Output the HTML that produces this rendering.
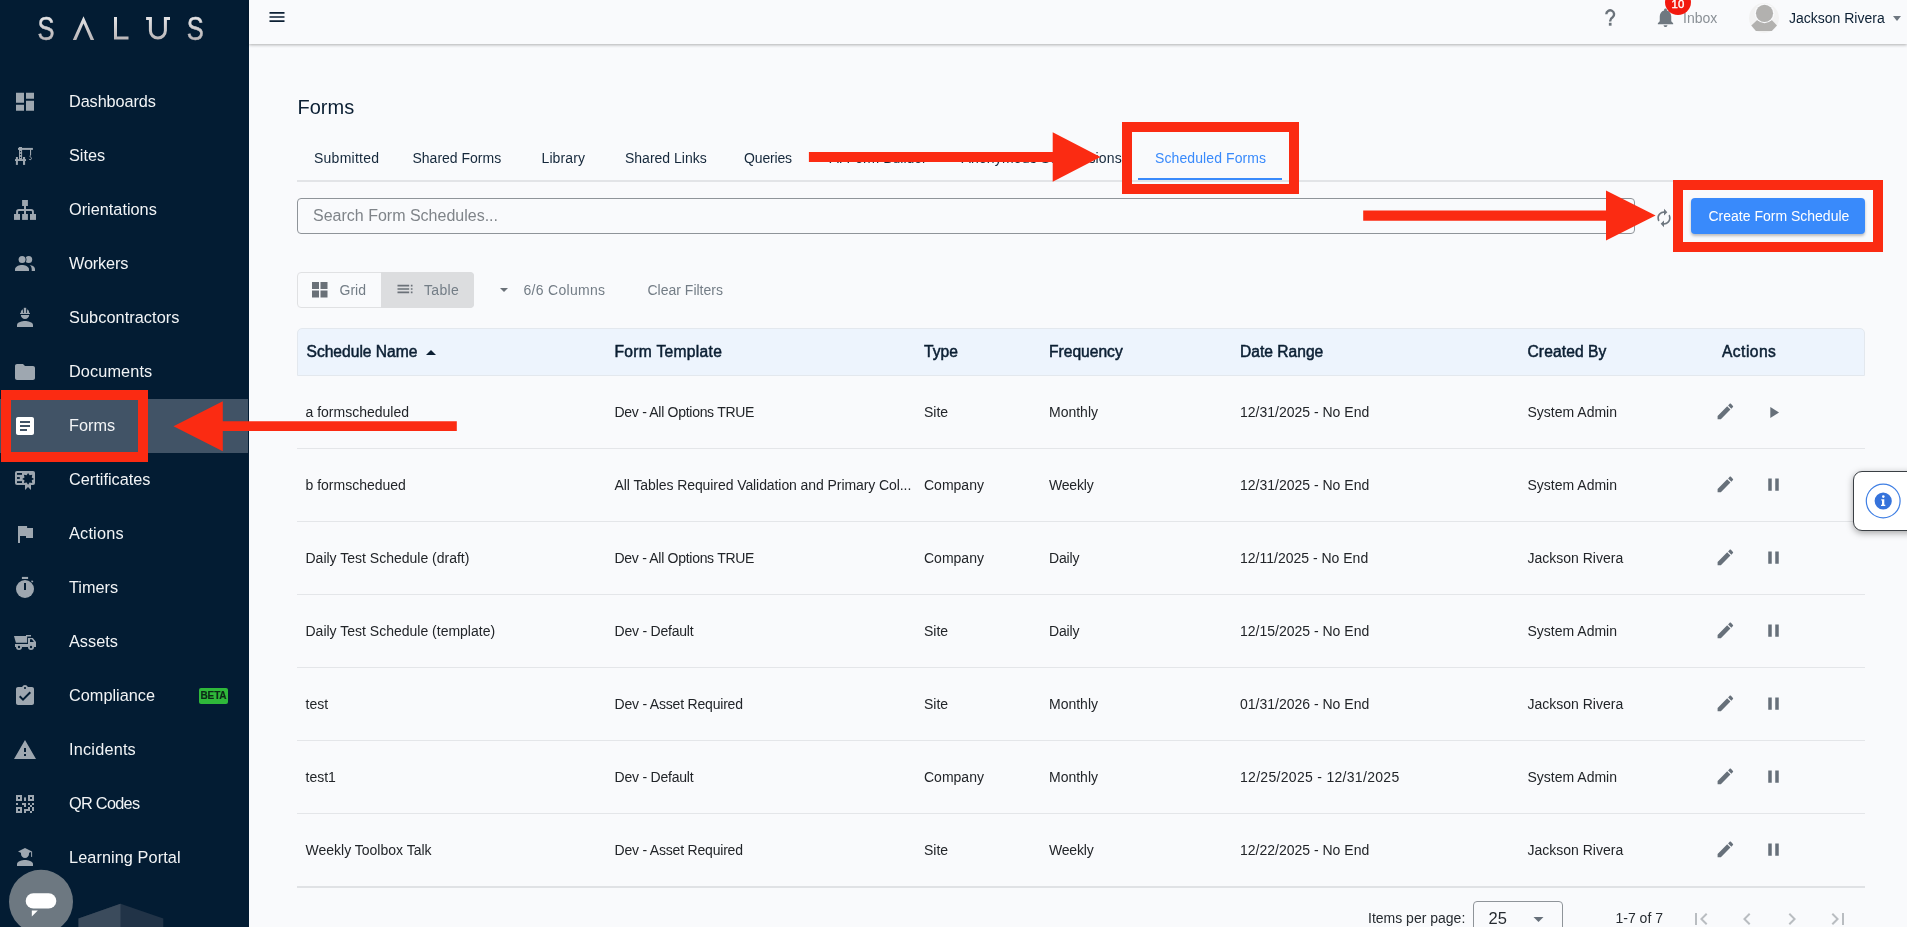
<!DOCTYPE html>
<html><head><meta charset="utf-8">
<style>
*{margin:0;padding:0;box-sizing:border-box}
html,body{width:1907px;height:927px;overflow:hidden;background:#f9fafc;font-family:"Liberation Sans",sans-serif;color:#1b2836;position:relative}
.a{position:absolute;white-space:nowrap}
#side{position:absolute;left:0;top:0;width:249px;height:927px;background:#031c33}
.nav{position:absolute;left:0;width:249px;height:54px}
.nav .t{position:absolute;left:69px;top:0;line-height:54px;font-size:16.3px;color:#f2f4f6}
.nav svg{position:absolute;left:13px;top:15px;width:24px;height:24px;fill:#9ea7b0}
.act{background:transparent}
</style></head><body>
<div style="position:absolute;left:0;top:0;width:1907px;height:927px;will-change:transform">
<div id="side">
<div class="a" style="left:0;top:399px;width:248px;height:54px;background:#415366"></div>
<svg class="a" style="left:30px;top:10px" width="185" height="36" viewBox="0 0 185 36">
<defs><linearGradient id="lg" x1="0" y1="0" x2="0" y2="1"><stop offset="0" stop-color="#e6e6e8"/><stop offset="1" stop-color="#b9b5b7"/></linearGradient>
<linearGradient id="lg2" gradientUnits="userSpaceOnUse" x1="0" y1="6" x2="0" y2="30"><stop offset="0" stop-color="#e6e6e8"/><stop offset="1" stop-color="#b9b5b7"/></linearGradient></defs>
<g fill="url(#lg2)" stroke="url(#lg2)" stroke-width="0.5">
<text x="7.6" y="29.6" font-family="Liberation Sans" font-size="34" textLength="17" lengthAdjust="spacingAndGlyphs">S</text>
<text x="156.8" y="29.6" font-family="Liberation Sans" font-size="34" textLength="17" lengthAdjust="spacingAndGlyphs">S</text>
</g>
<path d="M53.5 6.3L42.8 30H46.3L53.5 13.6L60.6 30H64.2z" fill="url(#lg2)"/>
<g fill="none" stroke="url(#lg2)" stroke-width="3">
<polyline points="85.5,7 85.5,28 98.5,28"/>
<path d="M120.4,7 V20.6 A7.5,7.5 0 0 0 135.4,20.6 V7 M116.1,8.45 H121.9 M133.9,8.45 H140"/>
</g>
</svg>
<div class="nav" style="top:74px"><svg viewBox="0 0 24 24"><g transform="translate(0,.8)"><path d="M3 13h8V3H3v10zm0 8h8v-6H3v6zm10 0h8V11h-8v10zm0-18v6h8V3h-8z"/></g></svg><div class="t" style="letter-spacing:-0.1px">Dashboards</div></div>
<div class="nav" style="top:128px"><svg viewBox="0 0 24 24"><rect x="5" y="4.9" width="14.9" height="2"/><rect x="5.9" y="4" width="3.1" height="1.5"/><rect x="6" y="5" width="3.1" height="11.4"/><circle cx="7.55" cy="8.6" r=".65" fill="#031c33"/><circle cx="7.55" cy="11.5" r=".65" fill="#031c33"/><circle cx="7.55" cy="14.4" r=".65" fill="#031c33"/><rect x="2" y="16.1" width="11" height="1.9"/><rect x="2.9" y="14" width="2" height="7.9"/><rect x="10" y="14" width="2.1" height="7.9"/><rect x="17" y="6.5" width="1.1" height="5.7"/><path d="M17.6 12.3c-1 .2-1.1 1.4-.1 1.7 1.3.4 1.3 2.6-.3 2.7-.6 0-1-.3-1.2-.8" fill="none" stroke="#9ea7b0" stroke-width="1"/></svg><div class="t">Sites</div></div>
<div class="nav" style="top:182px"><svg viewBox="0 0 24 24"><rect x="9.1" y="3" width="5.8" height="6"/><rect x="11" y="9" width="2" height="8"/><path d="M3.1 17v-2.2a2.8 2.8 0 0 1 2.8-2.8h12.2a2.8 2.8 0 0 1 2.8 2.8V17h-1.9v-2.2a.8.8 0 0 0-.8-.8H5.9a.8.8 0 0 0-.8.8V17z"/><rect x="1" y="17" width="6" height="5.9"/><rect x="9.1" y="17" width="5.8" height="5.9"/><rect x="17" y="17" width="6" height="5.9"/></svg><div class="t">Orientations</div></div>
<div class="nav" style="top:236px"><svg viewBox="0 0 24 24"><circle cx="15.7" cy="8.5" r="3.5"/><circle cx="9.1" cy="8.5" r="4.4" fill="#031c33"/><circle cx="9.1" cy="8.5" r="3.5"/><path d="M2 20v-1.6c0-3 4.4-4.4 7-4.4s7 1.4 7 4.4V20z"/><path d="M16.7 14.1c2.5.3 5.3 1.6 5.3 4.1V20h-3.3v-1.8c0-1.7-.8-3-2-4.1z"/></svg><div class="t" style="letter-spacing:-0.15px">Workers</div></div>
<div class="nav" style="top:290px"><svg viewBox="0 0 24 24"><path d="M4 22v-2.2c0-2.6 5.3-3.8 8-3.8s8 1.2 8 3.8V22z"/><path d="M7.8 10h8.4c0 2.3-1.9 4-4.2 4s-4.2-1.7-4.2-4z"/><rect x="7" y="7.9" width="10" height="1.2" rx=".4"/><rect x="10.8" y="2.8" width="2.4" height="5.5"/><path d="M7.7 8.2c0-1.7.7-3.1 2.1-3.9l.3 3.9zM16.3 8.2c0-1.7-.7-3.1-2.1-3.9l-.3 3.9z"/></svg><div class="t" style="letter-spacing:0.07px">Subcontractors</div></div>
<div class="nav" style="top:344px"><svg viewBox="0 0 24 24"><g transform="translate(0,1)"><path d="M10 4H4c-1.1 0-1.99.9-1.99 2L2 18c0 1.1.9 2 2 2h16c1.1 0 2-.9 2-2V8c0-1.1-.9-2-2-2h-8l-2-2z"/></g></svg><div class="t" style="letter-spacing:0.1px">Documents</div></div>
<div class="nav act" style="top:398px"><svg viewBox="0 0 24 24"><g transform="translate(0,1)"><path fill="#fff" d="M19 3H5c-1.1 0-2 .9-2 2v14c0 1.1.9 2 2 2h14c1.1 0 2-.9 2-2V5c0-1.1-.9-2-2-2zm-5 14H7v-2h7v2zm3-4H7v-2h10v2zm0-4H7V7h10v2z"/></g></svg><div class="t">Forms</div></div>
<div class="nav" style="top:452px"><svg viewBox="0 0 24 24"><rect x="2" y="4" width="20" height="14" rx="2"/><rect x="4" y="6" width="5" height="1.8" fill="#031c33"/><rect x="4" y="10.1" width="2.8" height="1.8" fill="#031c33"/><rect x="4" y="14.2" width="5" height="1.8" fill="#031c33"/><path d="M12 17h6v6l-3-3-3 3z"/><path fill="#031c33" d="M15.1 6l1.5 2.3 2.7-.5-.6 2.7 2.4 1.4-2.4 1.4.6 2.7-2.7-.5-1.5 2.3-1.5-2.3-2.7.5.6-2.7-2.4-1.4 2.4-1.4-.6-2.7 2.7.5z"/></svg><div class="t">Certificates</div></div>
<div class="nav" style="top:506px"><svg viewBox="0 0 24 24"><path d="M5 5h9.1v2H20v10h-7v-2H7v7H5z"/></svg><div class="t" style="letter-spacing:0.2px">Actions</div></div>
<div class="nav" style="top:560px"><svg viewBox="0 0 24 24"><rect x="8.9" y="1.9" width="6.2" height="2.1"/><circle cx="12" cy="14" r="9"/><rect x="11" y="8" width="2" height="7" fill="#031c33"/><path d="M18 6.2l1-1 1.4 1.4-1 1z"/></svg><div class="t">Timers</div></div>
<div class="nav" style="top:614px"><svg viewBox="0 0 24 24"><path d="M1 7h13.1v6.8H2.9z"/><rect x="13" y="6" width="5" height="1.5"/><path d="M15 9h4.8l3.2 4v5h-2.1a3 3 0 0 0-5.8 0H9a3 3 0 0 0-5.8 0H2v-3h13z"/><path d="M17 10.3v2.6h3.9l-2-2.6z" fill="#031c33"/><circle cx="6" cy="18" r="3"/><circle cx="18" cy="18" r="3"/><circle cx="6" cy="18" r="1.2" fill="#031c33"/><circle cx="18" cy="18" r="1.2" fill="#031c33"/></svg><div class="t">Assets</div></div>
<div class="nav" style="top:668px"><svg viewBox="0 0 24 24"><g transform="translate(0,1)"><path d="M19 3h-4.18C14.4 1.84 13.3 1 12 1c-1.3 0-2.4.84-2.82 2H5c-1.1 0-2 .9-2 2v14c0 1.1.9 2 2 2h14c1.1 0 2-.9 2-2V5c0-1.1-.9-2-2-2zm-7 0c.55 0 1 .45 1 1s-.45 1-1 1-1-.45-1-1 .45-1 1-1zm-2 14l-4-4 1.41-1.41L10 14.17l6.59-6.59L18 9l-8 8z"/></g></svg><div class="t">Compliance</div></div>
<div class="nav" style="top:722px"><svg viewBox="0 0 24 24"><g transform="translate(0,1)"><path d="M1 21h22L12 2 1 21zm12-3h-2v-2h2v2zm0-4h-2v-4h2v4z"/></g></svg><div class="t" style="letter-spacing:0.2px">Incidents</div></div>
<div class="nav" style="top:776px"><svg viewBox="0 0 24 24"><path d="M3 4h6v6H3zm2 2v2h2V6zM15 4h6v6h-6zm2 2v2h2V6zM3 16h6v6H3zm2 2v2h2v-2z" fill-rule="evenodd"/><rect x="11" y="6.4" width="2" height="3.6"/><rect x="3" y="12" width="2" height="2"/><rect x="9" y="12" width="4" height="2"/><rect x="11" y="14" width="2" height="2"/><rect x="15" y="12" width="2" height="2"/><rect x="19" y="12" width="2" height="2"/><rect x="17" y="14" width="2" height="2"/><rect x="15" y="16" width="2" height="2"/><rect x="19" y="16" width="2" height="4"/><rect x="11" y="18" width="6" height="2"/><rect x="11" y="20" width="2" height="2"/><rect x="17" y="20" width="2" height="2"/></svg><div class="t" style="letter-spacing:-0.7px">QR Codes</div></div>
<div class="nav" style="top:830px"><svg viewBox="0 0 24 24"><path d="M4 21v-2c0-2.7 5.3-4 8-4s8 1.3 8 4v2z"/><path d="M8 7.3h8v1.6c0 2.2-1.8 4-4 4s-4-1.8-4-4z"/><path d="M12 3l-7 3.5 7 3.3 7-3.3z"/><rect x="18.1" y="6.5" width="1" height="5.4"/></svg><div class="t" style="letter-spacing:0.08px">Learning Portal</div></div>
<div class="a" style="left:199px;top:688px;width:29px;height:16px;background:#2fb83a;border-radius:2px;font-size:10px;font-weight:bold;color:#0c2a17;line-height:16px;text-align:center;letter-spacing:-.15px;-webkit-text-stroke:.2px #0c2a17">BETA</div>
</div>

<div class="a" style="left:249px;top:0px;width:1658px;height:44px;background:#f9fafc;box-shadow:0 1px 3px rgba(0,0,0,.3)"></div>
<svg class="a" style="left:266.8px;top:7.3px;" width="20" height="20" viewBox="0 0 24 24" fill="#0b1f33"><path d="M3 18h18v-2H3v2zm0-5h18v-2H3v2zm0-7v2h18V6H3z"/></svg>
<svg class="a" style="left:1600px;top:5px;" width="20" height="25" viewBox="0 0 20 25" fill="#6e7780"><path d="M6.3 9.2A3.9 3.9 0 1 1 12.6 12.3C11.1 13.3 10.2 14.1 10.2 15.9V16.4" fill="none" stroke="#6b737b" stroke-width="2.4"/><rect x="8.85" y="17.8" width="2.7" height="2.9" fill="#6b737b"/></svg>
<svg class="a" style="left:1654px;top:6.3px;" width="23" height="23" viewBox="0 0 24 24" fill="#6f7880"><path d="M12 22c1.1 0 2-.9 2-2h-4c0 1.1.89 2 2 2zm6-6v-5c0-3.07-1.64-5.64-4.5-6.32V4c0-.83-.67-1.5-1.5-1.5s-1.5.67-1.5 1.5v.68C7.63 5.36 6 7.92 6 11v5l-2 2v1h16v-1l-2-2z"/></svg>
<div class="a" style="left:1683px;top:10.40px;font-size:14px;line-height:17.5px;color:#8a9096">Inbox</div>
<div class="a" style="left:1665px;top:-11px;width:26px;height:26px;background:#f2180e;border-radius:13px"></div>
<div class="a" style="left:1671.6px;top:-2.78px;font-size:11.4px;line-height:14.25px;color:#fff;-webkit-text-stroke:0.35px #fff">10</div>
<svg class="a" style="left:1749px;top:3px;" width="30" height="30" viewBox="0 0 30 30" fill="#6e7780"><circle cx="15" cy="15" r="15" fill="#f2f2f2"/><path d="M8.5 16.8H22.5L28 22.6L22.8 28H6.9L2.3 22.6z" fill="#b2b1af"/><circle cx="15.5" cy="10.3" r="9.9" fill="#f9fafc"/><circle cx="15.5" cy="10.3" r="8.6" fill="#b2b1af"/></svg>
<div class="a" style="left:1789px;top:9.90px;font-size:14px;line-height:17.5px;color:#0b1f33">Jackson Rivera</div>
<svg class="a" style="left:1893px;top:15.5px;" width="8" height="5" viewBox="0 0 8 5" fill="#6e7780"><path d="M0 0h8L4 5z"/></svg>
<div class="a" style="left:297.5px;top:94.57px;font-size:20px;line-height:25.0px;color:#0b1f33">Forms</div>
<div class="a" style="left:314px;top:150.20px;font-size:14px;line-height:17.5px;color:#15283b;letter-spacing:0.25px">Submitted</div>
<div class="a" style="left:412.5px;top:150.20px;font-size:14px;line-height:17.5px;color:#15283b">Shared Forms</div>
<div class="a" style="left:541.5px;top:150.20px;font-size:14px;line-height:17.5px;color:#15283b;letter-spacing:0.1px">Library</div>
<div class="a" style="left:625px;top:150.20px;font-size:14px;line-height:17.5px;color:#15283b">Shared Links</div>
<div class="a" style="left:744px;top:150.20px;font-size:14px;line-height:17.5px;color:#15283b;letter-spacing:-0.15px">Queries</div>
<div class="a" style="left:829.5px;top:150.20px;font-size:14px;line-height:17.5px;color:#15283b">AI Form Builder</div>
<div class="a" style="left:961.5px;top:150.20px;font-size:14px;line-height:17.5px;color:#15283b;letter-spacing:0.15px">Anonymous Submissions</div>
<div class="a" style="left:297px;top:180px;width:1568px;height:2px;background:#e2e4e7;"></div>
<div class="a" style="left:1155px;top:150.20px;font-size:14px;line-height:17.5px;color:#398afb;letter-spacing:0.1px">Scheduled Forms</div>
<div class="a" style="left:1138px;top:177.5px;width:144px;height:2px;background:#398afb;"></div>
<div class="a" style="left:297px;top:198px;width:1338px;height:36px;background:transparent;border:1px solid #8f9499;border-radius:4px"></div>
<div class="a" style="left:313px;top:205.96px;font-size:16px;line-height:20.0px;color:#7f8489">Search Form Schedules...</div>
<svg class="a" style="left:1653.8px;top:207.5px;" width="20" height="20" viewBox="0 0 24 24" fill="#6e7780"><path d="M12 6v3l4-4-4-4v3c-4.42 0-8 3.58-8 8 0 1.57.46 3.03 1.24 4.26L6.7 14.8c-.45-.83-.7-1.790-.7-2.8 0-3.31 2.69-6 6-6zm6.76 1.74L17.3 9.2c.44.84.7 1.79.7 2.8 0 3.31-2.69 6-6 6v-3l-4 4 4 4v-3c4.42 0 8-3.58 8-8 0-1.570-.46-3.03-1.24-4.26z"/></svg>
<div class="a" style="left:1691px;top:198px;width:174px;height:36px;background:#398afb;border-radius:4px;box-shadow:0 2px 3px rgba(0,0,0,.25)"></div>
<div class="a" style="left:1708.5px;top:208.10px;font-size:14px;line-height:17.5px;color:#fff">Create Form Schedule</div>
<div class="a" style="left:297px;top:272px;width:177px;height:36px;background:#f9fafc;border:1px solid #e0e1e3;border-radius:4px"></div>
<div class="a" style="left:381px;top:272px;width:93px;height:36px;background:#dcdddf;border-radius:0 4px 4px 0"></div>
<svg class="a" style="left:312px;top:282px;" width="16" height="16" viewBox="0 0 16 16" fill="#6a7178"><rect x="0" y="0" width="7" height="7"/><rect x="8.5" y="0" width="7" height="7"/><rect x="0" y="8.5" width="7" height="7"/><rect x="8.5" y="8.5" width="7" height="7"/></svg>
<div class="a" style="left:339.5px;top:281.60px;font-size:14px;line-height:17.5px;color:#737d86">Grid</div>
<svg class="a" style="left:394.6px;top:279.4px;" width="20" height="20" viewBox="0 0 24 24" fill="#6a7178"><path d="M3 9h14V7H3v2zm0 4h14v-2H3v2zm0 4h14v-2H3v2zm16 0h2v-2h-2v2zm0-10v2h2V7h-2zm0 6h2v-2h-2v2z"/></svg>
<div class="a" style="left:424px;top:281.60px;font-size:14px;line-height:17.5px;color:#737d86;letter-spacing:0.3px">Table</div>
<svg class="a" style="left:500px;top:288px;" width="8" height="4" viewBox="0 0 8 4" fill="#6a7178"><path d="M0 0h8L4 4z"/></svg>
<div class="a" style="left:523.5px;top:281.60px;font-size:14px;line-height:17.5px;color:#737d86;letter-spacing:0.3px">6/6 Columns</div>
<div class="a" style="left:647.5px;top:281.60px;font-size:14px;line-height:17.5px;color:#737d86">Clear Filters</div>
<div class="a" style="left:297px;top:328px;width:1568px;height:48px;background:#edf4fd;border:1px solid #e3e8ee;border-radius:5px 5px 0 0"></div>
<div class="a" style="left:306.5px;top:342.34px;font-size:15.6px;line-height:19.5px;color:#0b1f33;-webkit-text-stroke:0.5px #0b1f33">Schedule Name</div>
<div class="a" style="left:614.5px;top:342.34px;font-size:15.6px;line-height:19.5px;color:#0b1f33;letter-spacing:0.3px;-webkit-text-stroke:0.5px #0b1f33">Form Template</div>
<div class="a" style="left:924px;top:342.34px;font-size:15.6px;line-height:19.5px;color:#0b1f33;-webkit-text-stroke:0.5px #0b1f33">Type</div>
<div class="a" style="left:1049px;top:342.34px;font-size:15.6px;line-height:19.5px;color:#0b1f33;-webkit-text-stroke:0.5px #0b1f33">Frequency</div>
<div class="a" style="left:1240px;top:342.34px;font-size:15.6px;line-height:19.5px;color:#0b1f33;-webkit-text-stroke:0.5px #0b1f33">Date Range</div>
<div class="a" style="left:1527.5px;top:342.34px;font-size:15.6px;line-height:19.5px;color:#0b1f33;letter-spacing:0.1px;-webkit-text-stroke:0.5px #0b1f33">Created By</div>
<div class="a" style="left:1722px;top:342.34px;font-size:15.6px;line-height:19.5px;color:#0b1f33;letter-spacing:0.45px;-webkit-text-stroke:0.5px #0b1f33">Actions</div>
<svg class="a" style="left:425.5px;top:350px;" width="10" height="5" viewBox="0 0 10 5" fill="#0b1f33"><path d="M0 5h10L5 0z"/></svg>
<div class="a" style="left:305.5px;top:404.10px;font-size:14px;line-height:17.5px;color:#222529">a formscheduled</div>
<div class="a" style="left:614.5px;top:404.10px;font-size:14px;line-height:17.5px;color:#222529;letter-spacing:-0.29px">Dev - All Options TRUE</div>
<div class="a" style="left:924px;top:404.10px;font-size:14px;line-height:17.5px;color:#222529">Site</div>
<div class="a" style="left:1049px;top:404.10px;font-size:14px;line-height:17.5px;color:#222529">Monthly</div>
<div class="a" style="left:1240px;top:404.10px;font-size:14px;line-height:17.5px;color:#222529">12/31/2025 - No End</div>
<div class="a" style="left:1527.5px;top:404.10px;font-size:14px;line-height:17.5px;color:#222529">System Admin</div>
<svg class="a" style="left:1715px;top:401px;" width="20.8" height="20.8" viewBox="0 0 24 24" fill="#67707a"><path d="M3 17.25V21h3.75L17.81 9.94l-3.75-3.75L3 17.25zM20.71 7.04c.39-.39.39-1.02 0-1.41l-2.34-2.34c-.39-.39-1.02-.39-1.41 0l-1.83 1.83 3.75 3.75 1.83-1.83z"/></svg>
<svg class="a" style="left:1763.7px;top:402.5px;" width="19" height="19" viewBox="0 0 24 24" fill="#67707a"><path d="M8 5v14l11-7z"/></svg>
<div class="a" style="left:297px;top:448px;width:1568px;height:1px;background:#e4e6e9;"></div>
<div class="a" style="left:305.5px;top:477.10px;font-size:14px;line-height:17.5px;color:#222529">b formschedued</div>
<div class="a" style="left:614.5px;top:477.10px;font-size:14px;line-height:17.5px;color:#222529;letter-spacing:-0.08px">All Tables Required Validation and Primary Col...</div>
<div class="a" style="left:924px;top:477.10px;font-size:14px;line-height:17.5px;color:#222529">Company</div>
<div class="a" style="left:1049px;top:477.10px;font-size:14px;line-height:17.5px;color:#222529;letter-spacing:-0.2px">Weekly</div>
<div class="a" style="left:1240px;top:477.10px;font-size:14px;line-height:17.5px;color:#222529">12/31/2025 - No End</div>
<div class="a" style="left:1527.5px;top:477.10px;font-size:14px;line-height:17.5px;color:#222529">System Admin</div>
<svg class="a" style="left:1715px;top:474px;" width="20.8" height="20.8" viewBox="0 0 24 24" fill="#67707a"><path d="M3 17.25V21h3.75L17.81 9.94l-3.75-3.75L3 17.25zM20.71 7.04c.39-.39.39-1.02 0-1.41l-2.34-2.34c-.39-.39-1.02-.39-1.41 0l-1.83 1.83 3.75 3.75 1.83-1.83z"/></svg>
<svg class="a" style="left:1763px;top:473.8px;" width="21" height="21" viewBox="0 0 24 24" fill="#67707a"><path d="M6 19h4V5H6v14zm8-14v14h4V5h-4z"/></svg>
<div class="a" style="left:297px;top:521px;width:1568px;height:1px;background:#e4e6e9;"></div>
<div class="a" style="left:305.5px;top:550.10px;font-size:14px;line-height:17.5px;color:#222529">Daily Test Schedule (draft)</div>
<div class="a" style="left:614.5px;top:550.10px;font-size:14px;line-height:17.5px;color:#222529;letter-spacing:-0.29px">Dev - All Options TRUE</div>
<div class="a" style="left:924px;top:550.10px;font-size:14px;line-height:17.5px;color:#222529">Company</div>
<div class="a" style="left:1049px;top:550.10px;font-size:14px;line-height:17.5px;color:#222529;letter-spacing:-0.15px">Daily</div>
<div class="a" style="left:1240px;top:550.10px;font-size:14px;line-height:17.5px;color:#222529">12/11/2025 - No End</div>
<div class="a" style="left:1527.5px;top:550.10px;font-size:14px;line-height:17.5px;color:#222529">Jackson Rivera</div>
<svg class="a" style="left:1715px;top:547px;" width="20.8" height="20.8" viewBox="0 0 24 24" fill="#67707a"><path d="M3 17.25V21h3.75L17.81 9.94l-3.75-3.75L3 17.25zM20.71 7.04c.39-.39.39-1.02 0-1.41l-2.34-2.34c-.39-.39-1.02-.39-1.41 0l-1.83 1.83 3.75 3.75 1.83-1.83z"/></svg>
<svg class="a" style="left:1763px;top:546.8px;" width="21" height="21" viewBox="0 0 24 24" fill="#67707a"><path d="M6 19h4V5H6v14zm8-14v14h4V5h-4z"/></svg>
<div class="a" style="left:297px;top:594px;width:1568px;height:1px;background:#e4e6e9;"></div>
<div class="a" style="left:305.5px;top:623.10px;font-size:14px;line-height:17.5px;color:#222529">Daily Test Schedule (template)</div>
<div class="a" style="left:614.5px;top:623.10px;font-size:14px;line-height:17.5px;color:#222529;letter-spacing:-0.22px">Dev - Default</div>
<div class="a" style="left:924px;top:623.10px;font-size:14px;line-height:17.5px;color:#222529">Site</div>
<div class="a" style="left:1049px;top:623.10px;font-size:14px;line-height:17.5px;color:#222529;letter-spacing:-0.15px">Daily</div>
<div class="a" style="left:1240px;top:623.10px;font-size:14px;line-height:17.5px;color:#222529">12/15/2025 - No End</div>
<div class="a" style="left:1527.5px;top:623.10px;font-size:14px;line-height:17.5px;color:#222529">System Admin</div>
<svg class="a" style="left:1715px;top:620px;" width="20.8" height="20.8" viewBox="0 0 24 24" fill="#67707a"><path d="M3 17.25V21h3.75L17.81 9.94l-3.75-3.75L3 17.25zM20.71 7.04c.39-.39.39-1.02 0-1.41l-2.34-2.34c-.39-.39-1.02-.39-1.41 0l-1.83 1.83 3.75 3.75 1.83-1.83z"/></svg>
<svg class="a" style="left:1763px;top:619.8px;" width="21" height="21" viewBox="0 0 24 24" fill="#67707a"><path d="M6 19h4V5H6v14zm8-14v14h4V5h-4z"/></svg>
<div class="a" style="left:297px;top:667px;width:1568px;height:1px;background:#e4e6e9;"></div>
<div class="a" style="left:305.5px;top:696.10px;font-size:14px;line-height:17.5px;color:#222529">test</div>
<div class="a" style="left:614.5px;top:696.10px;font-size:14px;line-height:17.5px;color:#222529;letter-spacing:-0.2px">Dev - Asset Required</div>
<div class="a" style="left:924px;top:696.10px;font-size:14px;line-height:17.5px;color:#222529">Site</div>
<div class="a" style="left:1049px;top:696.10px;font-size:14px;line-height:17.5px;color:#222529">Monthly</div>
<div class="a" style="left:1240px;top:696.10px;font-size:14px;line-height:17.5px;color:#222529">01/31/2026 - No End</div>
<div class="a" style="left:1527.5px;top:696.10px;font-size:14px;line-height:17.5px;color:#222529">Jackson Rivera</div>
<svg class="a" style="left:1715px;top:693px;" width="20.8" height="20.8" viewBox="0 0 24 24" fill="#67707a"><path d="M3 17.25V21h3.75L17.81 9.94l-3.75-3.75L3 17.25zM20.71 7.04c.39-.39.39-1.02 0-1.41l-2.34-2.34c-.39-.39-1.02-.39-1.41 0l-1.83 1.83 3.75 3.75 1.83-1.83z"/></svg>
<svg class="a" style="left:1763px;top:692.8px;" width="21" height="21" viewBox="0 0 24 24" fill="#67707a"><path d="M6 19h4V5H6v14zm8-14v14h4V5h-4z"/></svg>
<div class="a" style="left:297px;top:740px;width:1568px;height:1px;background:#e4e6e9;"></div>
<div class="a" style="left:305.5px;top:769.10px;font-size:14px;line-height:17.5px;color:#222529">test1</div>
<div class="a" style="left:614.5px;top:769.10px;font-size:14px;line-height:17.5px;color:#222529;letter-spacing:-0.22px">Dev - Default</div>
<div class="a" style="left:924px;top:769.10px;font-size:14px;line-height:17.5px;color:#222529">Company</div>
<div class="a" style="left:1049px;top:769.10px;font-size:14px;line-height:17.5px;color:#222529">Monthly</div>
<div class="a" style="left:1240px;top:769.10px;font-size:14px;line-height:17.5px;color:#222529;letter-spacing:0.3px">12/25/2025 - 12/31/2025</div>
<div class="a" style="left:1527.5px;top:769.10px;font-size:14px;line-height:17.5px;color:#222529">System Admin</div>
<svg class="a" style="left:1715px;top:766px;" width="20.8" height="20.8" viewBox="0 0 24 24" fill="#67707a"><path d="M3 17.25V21h3.75L17.81 9.94l-3.75-3.75L3 17.25zM20.71 7.04c.39-.39.39-1.02 0-1.41l-2.34-2.34c-.39-.39-1.02-.39-1.41 0l-1.83 1.83 3.75 3.75 1.83-1.83z"/></svg>
<svg class="a" style="left:1763px;top:765.8px;" width="21" height="21" viewBox="0 0 24 24" fill="#67707a"><path d="M6 19h4V5H6v14zm8-14v14h4V5h-4z"/></svg>
<div class="a" style="left:297px;top:813px;width:1568px;height:1px;background:#e4e6e9;"></div>
<div class="a" style="left:305.5px;top:842.10px;font-size:14px;line-height:17.5px;color:#222529">Weekly Toolbox Talk</div>
<div class="a" style="left:614.5px;top:842.10px;font-size:14px;line-height:17.5px;color:#222529;letter-spacing:-0.2px">Dev - Asset Required</div>
<div class="a" style="left:924px;top:842.10px;font-size:14px;line-height:17.5px;color:#222529">Site</div>
<div class="a" style="left:1049px;top:842.10px;font-size:14px;line-height:17.5px;color:#222529;letter-spacing:-0.2px">Weekly</div>
<div class="a" style="left:1240px;top:842.10px;font-size:14px;line-height:17.5px;color:#222529">12/22/2025 - No End</div>
<div class="a" style="left:1527.5px;top:842.10px;font-size:14px;line-height:17.5px;color:#222529">Jackson Rivera</div>
<svg class="a" style="left:1715px;top:839px;" width="20.8" height="20.8" viewBox="0 0 24 24" fill="#67707a"><path d="M3 17.25V21h3.75L17.81 9.94l-3.75-3.75L3 17.25zM20.71 7.04c.39-.39.39-1.02 0-1.41l-2.34-2.34c-.39-.39-1.02-.39-1.41 0l-1.83 1.83 3.75 3.75 1.83-1.83z"/></svg>
<svg class="a" style="left:1763px;top:838.8px;" width="21" height="21" viewBox="0 0 24 24" fill="#67707a"><path d="M6 19h4V5H6v14zm8-14v14h4V5h-4z"/></svg>
<div class="a" style="left:297px;top:886px;width:1568px;height:2px;background:#e0e2e5;"></div>
<div class="a" style="left:1368px;top:910.20px;font-size:14px;line-height:17.5px;color:#262b30">Items per page:</div>
<div class="a" style="left:1473px;top:900.8px;width:90px;height:40px;background:transparent;border:1px solid #8f9499;border-radius:4px"></div>
<div class="a" style="left:1488.5px;top:907.97px;font-size:16.5px;line-height:20.62px;color:#262b30">25</div>
<svg class="a" style="left:1533px;top:916.5px;" width="11" height="5" viewBox="0 0 10 5" fill="#67707a"><path d="M0 0h10L5 5z"/></svg>
<div class="a" style="left:1615.5px;top:910.20px;font-size:14px;line-height:17.5px;color:#262b30">1-7 of 7</div>
<svg class="a" style="left:1688.5px;top:907px;" width="24" height="24" viewBox="0 0 24 24" fill="#b9bdc1"><path d="M18.41 16.59L13.82 12l4.59-4.59L17 6l-6 6 6 6zM6 6h2v12H6z"/></svg>
<svg class="a" style="left:1735px;top:907px;" width="24" height="24" viewBox="0 0 24 24" fill="#b9bdc1"><path d="M15.41 7.41L14 6l-6 6 6 6 1.41-1.41L10.83 12z"/></svg>
<svg class="a" style="left:1780px;top:907px;" width="24" height="24" viewBox="0 0 24 24" fill="#b9bdc1"><path d="M10 6L8.59 7.41 13.17 12l-4.58 4.59L10 18l6-6z"/></svg>
<svg class="a" style="left:1826px;top:907px;" width="24" height="24" viewBox="0 0 24 24" fill="#b9bdc1"><path d="M5.59 7.41L10.18 12l-4.59 4.59L7 18l6-6-6-6zM16 6h2v12h-2z"/></svg>
<div class="a" style="left:1853px;top:471px;width:70px;height:60px;background:#fff;border:1px solid #3a3f44;border-radius:9px;box-shadow:0 2px 7px rgba(0,0,0,.35)"></div>
<svg class="a" style="left:1865px;top:483px;" width="37" height="37" viewBox="0 0 37 37" fill="#6e7780"><circle cx="18.2" cy="18" r="16.9" fill="none" stroke="#3f7fe4" stroke-width="1.2"/><circle cx="18.2" cy="18" r="8.6" fill="#3673db"/><path d="M16.3 16.2h3v5.6h1v1.3h-4.3v-1.3h1v-4.3h-.7z" fill="#fff"/><circle cx="18.3" cy="13.6" r="1.3" fill="#fff"/></svg>
<svg class="a" style="left:0px;top:860px;" width="249" height="67" viewBox="0 0 249 67" fill="none"><path d="M78.5 67V58.5L120.5 43.7L163.3 58.5V67z" fill="#213347"/><path d="M78.5 67V58.5L120.5 43.7V67z" fill="#3b4b5c"/><circle cx="41" cy="41.7" r="32" fill="#6d7881"/><rect x="25.7" y="33.2" width="30.6" height="15.4" rx="7.7" fill="#fff"/><path d="M31.8 50.6h6l-6 6z" fill="#fff"/></svg>
<div class="a" style="left:1122px;top:122px;width:177px;height:71.6px;border:10.4px solid #fb2b12"></div>
<svg class="a" style="left:0;top:0" width="1907" height="927"><path d="M808.9 152.1H1052.7V132.15L1100.5 157L1052.7 181.85V161.9H808.9z" fill="#fb2b12"/></svg>
<div class="a" style="left:1673px;top:179.8px;width:209.70000000000005px;height:72.0px;border:10.4px solid #fb2b12"></div>
<svg class="a" style="left:0;top:0" width="1907" height="927"><path d="M1363.2 210.5H1606V190.6L1655.6 215.6L1606 240.6V220.7H1363.2z" fill="#fb2b12"/></svg>
<div class="a" style="left:1px;top:390px;width:147px;height:72px;border:10.4px solid #fb2b12"></div>
<svg class="a" style="left:0;top:0" width="1907" height="927"><path d="M456.8 421.3H222.8V401.2L173.5 426.2L222.8 451.2V431.09999999999997H456.8z" fill="#fb2b12"/></svg>
</div>
</body></html>
